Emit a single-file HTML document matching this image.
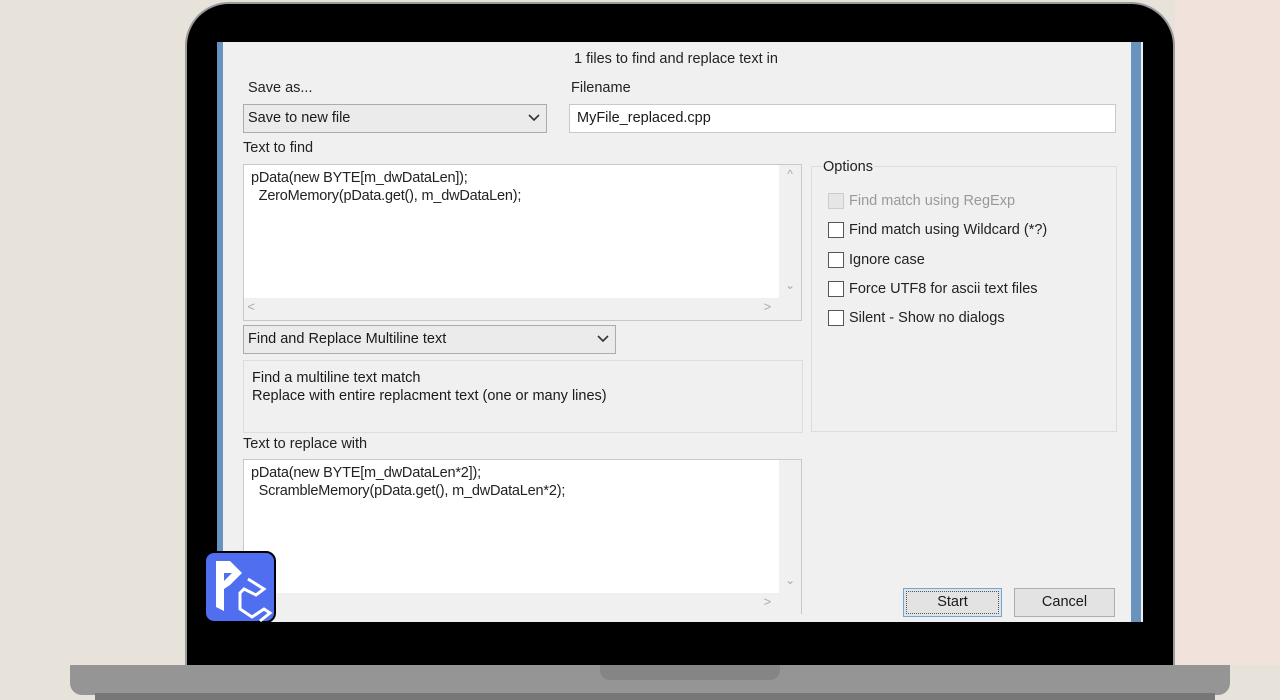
<!DOCTYPE html>
<html><head><style>
*{margin:0;padding:0;box-sizing:border-box}
body{width:1280px;height:700px;overflow:hidden;position:relative;background:#e8e3da;font-family:"Liberation Sans",sans-serif;font-size:14.5px;color:#1a1a1a}
.abs{position:absolute}
.bez{left:185px;top:2px;width:990px;height:670px;background:#000;border:2px solid #9a9a9a;border-radius:44px 44px 0 0}
.scr{left:217px;top:42px;width:926px;height:580px;background:#f0f0f0;overflow:hidden}
.lbl{position:absolute;font-size:14.5px;color:#222;white-space:nowrap}
.box{position:absolute;background:#fff;border:1px solid #c8c8c8}
.combo{position:absolute;background:#ebebeb;border:1px solid #acacac;padding:5px 4px;font-size:14.5px;white-space:nowrap}
.chev{position:absolute;right:6px;top:9px}
.code{font-size:14.5px;line-height:18px;padding:4px 7px;color:#222;white-space:nowrap;letter-spacing:-0.2px}
.cb{position:absolute;width:16px;height:16px;border:1px solid #555;background:#fff}
.btn{position:absolute;background:#e3e3e3;border:1px solid #adadad;text-align:center;font-size:14.5px;line-height:26px}
</style></head><body>
<div class="abs" style="left:1175px;top:0;width:105px;height:665px;background:#f2e2dc"></div>
<div class="abs bez"></div>
<div class="abs scr">
  <div class="abs" style="left:0;top:0;width:6px;height:580px;background:#6893bf"></div>
  <div class="abs" style="left:914px;top:0;width:10px;height:580px;background:#6893bf"></div>
  <div class="lbl" style="left:357px;top:9px">1 files to find and replace text in</div>
  <div class="lbl" style="left:31px;top:38px">Save as...</div>
  <div class="lbl" style="left:354px;top:38px">Filename</div>
  <div class="combo" style="left:26px;top:62px;width:304px;height:29px">Save to new file<svg class="chev" width="12" height="8" viewBox="0 0 12 8"><path d="M1 1 L6 6 L11 1" fill="none" stroke="#333" stroke-width="1.6"/></svg></div>
  <div class="box" style="left:352px;top:62px;width:547px;height:29px;padding:5px 7px">MyFile_replaced.cpp</div>
  <div class="lbl" style="left:26px;top:98px">Text to find</div>
  <div class="box code" style="left:26px;top:122px;width:559px;height:157px">pData(new BYTE[m_dwDataLen]);<br>&nbsp;&nbsp;ZeroMemory(pData.get(), m_dwDataLen);
    <div class="abs" style="left:0;top:133px;width:557px;height:22px;background:#f0f0f0;color:#aaa;font-size:13px">&nbsp;&lt;<span style="position:absolute;right:30px">&gt;</span></div>
    <div class="abs" style="right:0;top:0;width:22px;height:133px;background:#f0f0f0;color:#aaa;text-align:center;font-size:12px">^<div style="position:absolute;bottom:4px;width:22px">⌄</div></div>
  </div>
  <div class="combo" style="left:26px;top:283px;width:373px;height:29px">Find and Replace Multiline text<svg class="chev" width="12" height="8" viewBox="0 0 12 8"><path d="M1 1 L6 6 L11 1" fill="none" stroke="#333" stroke-width="1.6"/></svg></div>
  <div class="abs" style="left:26px;top:318px;width:560px;height:73px;border:1px solid #ddd;padding:8px 8px;line-height:18px;font-size:14.5px;white-space:nowrap">Find a multiline text match<br>Replace with entire replacment text (one or many lines)</div>
  <div class="lbl" style="left:26px;top:394px">Text to replace with</div>
  <div class="box code" style="left:26px;top:417px;width:559px;height:155px">pData(new BYTE[m_dwDataLen*2]);<br>&nbsp;&nbsp;ScrambleMemory(pData.get(), m_dwDataLen*2);
    <div class="abs" style="left:0;top:133px;width:557px;height:22px;background:#f0f0f0;color:#aaa;font-size:13px"><span style="position:absolute;right:30px">&gt;</span></div>
    <div class="abs" style="right:0;top:0;width:22px;height:133px;background:#f0f0f0;color:#aaa;text-align:center;font-size:12px"><div style="position:absolute;bottom:4px;width:22px">⌄</div></div>
  </div>
  <div class="abs" style="left:594px;top:124px;width:306px;height:266px;border:1px solid #ddd"></div>
  <div class="lbl" style="left:605px;top:117px;background:#f0f0f0;padding:0 1px">Options</div>
  <div class="cb" style="left:611px;top:151px;border-color:#ccc;background:#e6e6e6"></div><div class="lbl" style="left:632px;top:151px;color:#999">Find match using RegExp</div>
  <div class="cb" style="left:611px;top:180px"></div><div class="lbl" style="left:632px;top:180px">Find match using Wildcard (*?)</div>
  <div class="cb" style="left:611px;top:210px"></div><div class="lbl" style="left:632px;top:210px">Ignore case</div>
  <div class="cb" style="left:611px;top:239px"></div><div class="lbl" style="left:632px;top:239px">Force UTF8 for ascii text files</div>
  <div class="cb" style="left:611px;top:268px"></div><div class="lbl" style="left:632px;top:268px">Silent - Show no dialogs</div>
  <div class="btn" style="left:686px;top:546px;width:99px;height:29px;border:1px solid #6fa6d8;outline:1px dotted #555;outline-offset:-4px">Start</div>
  <div class="btn" style="left:797px;top:546px;width:101px;height:29px">Cancel</div>
</div>
<div class="abs" style="left:70px;top:665px;width:1160px;height:30px;background:#959595;border-radius:0 0 12px 12px"></div>
<div class="abs" style="left:95px;top:693px;width:1120px;height:7px;background:#777"></div>
<div class="abs" style="left:600px;top:665px;width:180px;height:15px;background:#858585;border-radius:0 0 10px 10px"></div>
<svg class="abs" style="left:204px;top:551px" width="72" height="72" viewBox="0 0 72 72">
<rect x="1" y="1" width="70" height="70" rx="9" fill="#4f6ef0" stroke="#000" stroke-width="2"/>
<path d="M12 10 L26 10 L38 22 L26 34 L20 38 L20 60 L12 56 Z" fill="#fff"/>
<path d="M20 22 L28 22 L20 30 Z" fill="#4f6ef0"/>
<path d="M44 28 L60 38 L52 44 L40 38 L36 42 L36 58 L48 66 L60 58 L66 62 L56 70" fill="none" stroke="#fff" stroke-width="3"/>
</svg>
</body></html>
